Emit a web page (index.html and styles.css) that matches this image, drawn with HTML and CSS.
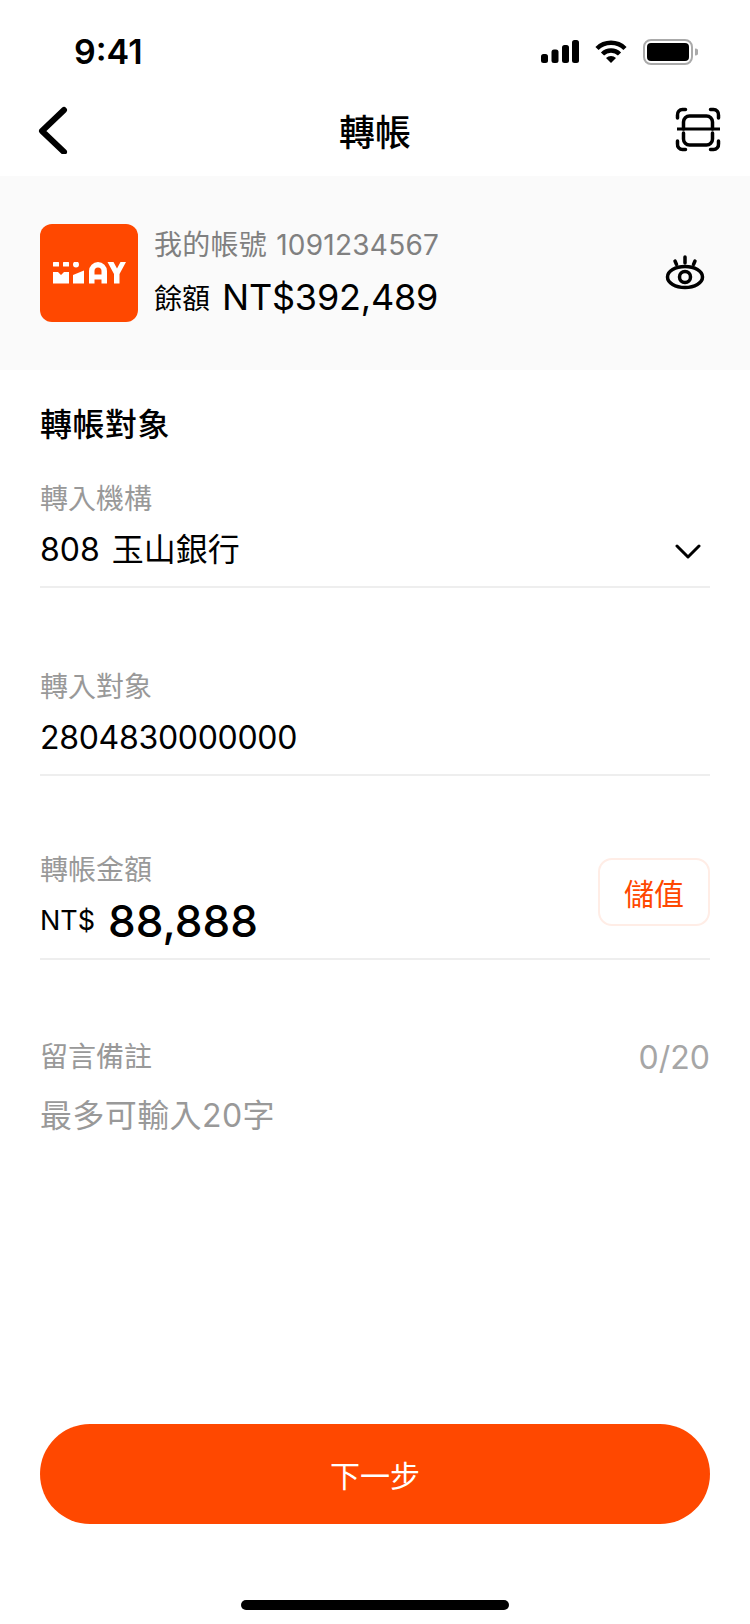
FILE: index.html
```html
<!DOCTYPE html>
<html lang="zh-Hant">
<head>
  <meta charset="UTF-8">
  <title>轉帳</title>
  <meta name="viewport" content="width=device-width, initial-scale=1.0">
  <link rel="stylesheet" href="styles.css">
</head>
<body>
  <div class="screen">
    <div class="status-bar">
      <span class="time">9:41</span>
      <div class="status-icons">
        <svg width="38" height="23" viewBox="0 0 38 23"><rect x="0" y="14" width="7" height="9" rx="2.500"/><rect x="10.500" y="9.500" width="7" height="13.500" rx="2.500"/><rect x="21" y="5" width="7" height="18" rx="2.500"/><rect x="31" y="0" width="7" height="23" rx="2.500"/></svg>
        <svg width="32" height="23" viewBox="0 0 32 23"><path d="M2 8.500 A20 20 0 0 1 30 8.500" fill="none" stroke="#000" stroke-width="4.500"/><path d="M7.500 14 A12 12 0 0 1 24.500 14" fill="none" stroke="#000" stroke-width="4.500"/><path d="M11 18 A7.500 7.500 0 0 1 21 18 L16 23 Z"/></svg>
        <svg width="55" height="26" viewBox="0 0 55 26"><rect x="1" y="1" width="48" height="24" rx="7" fill="none" stroke="#aaa" stroke-width="2"/><rect x="4" y="4" width="42" height="18" rx="4"/><path d="M52 9.500 A3.500 3.500 0 0 1 52 16.500 Z" fill="#aaa"/></svg>
      </div>
    </div>

    <div class="nav-bar">
      <svg class="back" width="30" height="48" viewBox="0 0 30 48"><path d="M26 4 L4 25 L26 46" fill="none" stroke="#000" stroke-width="6" stroke-linecap="round" stroke-linejoin="round"/></svg>
      <h1>轉帳</h1>
      <svg class="scan" width="46" height="46" viewBox="0 0 46 46" fill="none" stroke="#000" stroke-width="3.500" stroke-linecap="round"><path d="M2.500 11 V8 a5 5 0 0 1 5-5.500 h3"/><path d="M43.500 11 V8 a5 5 0 0 0-5-5.500 h-3"/><path d="M2.500 34 v3 a5 5 0 0 0 5 5.500 h3"/><path d="M43.500 34 v3 a5 5 0 0 1-5 5.500 h-3"/><path d="M2 22 H45" stroke-width="3" stroke-linecap="butt"/><path d="M8.500 22 V15 a6 6 0 0 1 6-6 h17 a6 6 0 0 1 6 6 v7"/><path d="M8.500 26 V32 a6 6 0 0 0 6 6 h17 a6 6 0 0 0 6-6 v-6"/></svg>
    </div>

    <section class="account">
      <div class="logo">
        <svg width="73" height="22" viewBox="0 0 73 22" fill="#fff"><rect x="0" y="0" width="6" height="4.500" rx="0.500"/><rect x="10" y="0" width="6" height="4.500" rx="0.500"/><circle cx="23" cy="2.500" r="3"/><path d="M0 10 H5 L8 13 L11 10 H16 V21.500 H0 Z"/><path d="M20 13 L31 8.500 V21.500 H20 Z"/><path fill-rule="evenodd" d="M45 0 a9 9 0 0 1 9 9 V21.500 H48.500 V17.500 H41.500 V21.500 H36 V9 a9 9 0 0 1 9-9 Z M41.500 12.500 H48.500 V9 a3.500 3.500 0 0 0-7 0 Z"/><path d="M54.500 0 H60.500 L64 6.500 L67.500 0 H73 L66.500 12 V21.500 H61 V12 Z"/></svg>
      </div>
      <div class="account-info">
        <div class="account-no">我的帳號 1091234567</div>
        <div class="balance"><span class="balance-label">餘額</span><span class="balance-value">NT$392,489</span></div>
      </div>
      <svg class="eye" width="42" height="36" viewBox="0 0 42 36" fill="none" stroke="#000" stroke-linecap="round"><ellipse cx="20" cy="22" rx="17.500" ry="10.500" stroke-width="3.500"/><circle cx="20" cy="22" r="5.500" stroke-width="3.500"/><path d="M20 2 V8 M10 6 L11.500 9.500 M30 6 L28.500 9.500" stroke-width="3.500"/></svg>
    </section>

    <main class="form">
      <h2>轉帳對象</h2>

      <div class="field field-bank">
        <div class="field-text">
          <div class="label">轉入機構</div>
          <div class="value value-bank">808 玉山銀行</div>
        </div>
        <svg class="chevron" width="26" height="16" viewBox="0 0 26 16"><path d="M2 2 L13 13 L24 2" fill="none" stroke="#000" stroke-width="3" stroke-linecap="round" stroke-linejoin="round"/></svg>
      </div>

      <div class="field field-target">
        <div class="field-text">
          <div class="label">轉入對象</div>
          <div class="value value-account">2804830000000</div>
        </div>
      </div>

      <div class="field field-amount">
        <div class="field-text">
          <div class="label">轉帳金額</div>
          <div class="amount"><span class="currency">NT$</span><span class="amount-value">88,888</span></div>
        </div>
        <button class="topup" type="button">儲值</button>
      </div>

      <div class="note">
        <div class="note-head"><span class="label">留言備註</span><span class="counter">0/20</span></div>
        <div class="placeholder">最多可輸入20字</div>
      </div>
    </main>

    <div class="footer">
      <button class="next" type="button">下一步</button>
      <div class="home-bar"></div>
    </div>
  </div>
</body>
</html>
```

FILE: styles.css
```css
* {
  box-sizing: border-box;
}

body {
  margin: 0;
  background: #fff;
  color: #000;
  font-family: Inter, "Noto Sans CJK TC", sans-serif;
}

.screen {
  width: 750px;
  height: 1624px;
  display: flex;
  flex-direction: column;
  overflow: hidden;
}

.status-bar {
  height: 84px;
  padding: 19px 52px 0 74px;
  display: flex;
  justify-content: space-between;
  align-items: center;
}

.time {
  font-size: 34px;
  font-weight: 600;
}

.status-icons {
  display: flex;
  align-items: center;
  gap: 16px;
}

.nav-bar {
  height: 92px;
  padding: 0 29px 0 38px;
  display: flex;
  align-items: center;
}

.back {
  margin-right: 7px;
}

.nav-bar h1 {
  flex: 1;
  margin: 0;
  font-size: 36px;
  font-weight: 500;
  text-align: center;
}

.account {
  height: 194px;
  padding: 0 40px;
  background: #fafafa;
  display: flex;
  align-items: center;
}

.logo {
  width: 98px;
  height: 98px;
  border-radius: 12px;
  background: #ff4800;
  display: flex;
  align-items: center;
  justify-content: center;
  padding-left: 1px;
}

.account-info {
  flex: 1;
  margin-left: 16px;
}

.account-no {
  font-size: 28px;
  color: #808080;
  line-height: 40px;
  margin-top: -2px;
  letter-spacing: 0.25px;
  word-spacing: 1px;
}

.balance {
  margin-top: 10px;
  display: flex;
  align-items: center;
  gap: 12px;
}

.balance-label {
  font-size: 28px;
}

.balance-value {
  font-size: 36px;
  letter-spacing: -0.2px;
}

.eye {
  margin-right: 3px;
}

.form {
  flex: 1;
  padding: 0 40px;
}

.form h2 {
  margin: 35px 0 0;
  font-size: 32px;
  line-height: 40px;
  font-weight: 500;
  letter-spacing: 0.5px;
}

.field {
  display: flex;
  justify-content: space-between;
  border-bottom: 2px solid #eee;
}

.field-text {
  flex: 1;
}

.field-bank {
  margin-top: 34px;
  padding-bottom: 14px;
  align-items: center;
}

.field-target {
  margin-top: 79px;
  padding-bottom: 14px;
}

.field-amount {
  margin-top: 74px;
  padding-bottom: 11px;
  align-items: flex-start;
}

.label {
  font-size: 28px;
  line-height: 40px;
  color: #999;
}

.value {
  font-size: 32px;
  line-height: 44px;
  margin-top: 9px;
}

.value-bank {
  word-spacing: 3px;
}

.value-account {
  letter-spacing: -0.3px;
}

.chevron {
  margin-right: 9px;
  margin-top: 52px;
}

.amount {
  display: flex;
  align-items: center;
  gap: 13px;
  line-height: 52px;
  margin-top: 5px;
}

.currency {
  font-size: 27px;
}

.amount-value {
  font-size: 44px;
  font-weight: 500;
}

.topup {
  width: 112px;
  height: 68px;
  border: 2px solid #ffede6;
  border-radius: 14px;
  background: #fff;
  color: #ff4800;
  font-size: 30px;
  font-family: inherit;
  margin-top: 8px;
}

.note {
  margin-top: 77px;
}

.note-head {
  display: flex;
  justify-content: space-between;
  align-items: center;
}

.counter {
  font-size: 32px;
  color: #a6a6a6;
}

.placeholder {
  margin-top: 18px;
  font-size: 32px;
  line-height: 42px;
  color: #999;
  letter-spacing: 0.4px;
}

.footer {
  padding: 0 40px;
}

.next {
  width: 100%;
  height: 100px;
  border: none;
  border-radius: 50px;
  background: #ff4800;
  color: #fff;
  font-size: 30px;
  font-family: inherit;
}

.home-bar {
  width: 268px;
  height: 10px;
  margin: 76px auto 14px;
  border-radius: 5px;
  background: #000;
}
```
